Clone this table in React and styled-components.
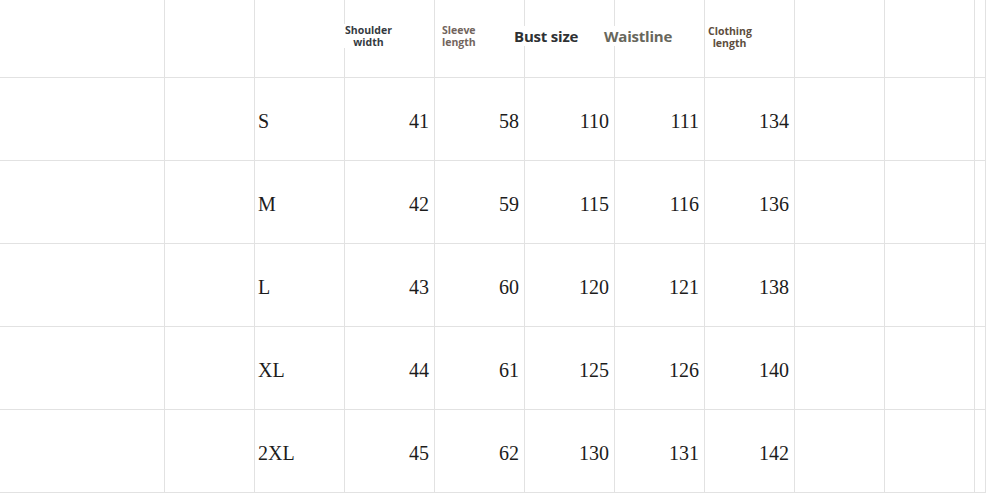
import styled, { createGlobalStyle } from "styled-components";

const sizes = [
  { name: "S", values: [41, 58, 110, 111, 134] },
  { name: "M", values: [42, 59, 115, 116, 136] },
  { name: "L", values: [43, 60, 120, 121, 138] },
  { name: "XL", values: [44, 61, 125, 126, 140] },
  { name: "2XL", values: [45, 62, 130, 131, 142] },
];

export default function App() {
  return (
    <>
      <Global />
      <Sheet>
        <HeadCell />
        <HeadCell />
        <HeadCell />
        <HeadCell>
          <SmallLabel $color="#343a3f" $shift="-3px" $width="49px">
            Shoulder
            <br />
            width
          </SmallLabel>
        </HeadCell>
        <HeadCell>
          <SmallLabel $color="#72645d" $shift="5px" $align="left">
            Sleeve
            <br />
            length
          </SmallLabel>
        </HeadCell>
        <HeadCell>
          <BigLabel $color="#2e3133" $shift="-12px">Bust size</BigLabel>
        </HeadCell>
        <HeadCell>
          <BigLabel $color="#67675c" $shift="-12px">Waistline</BigLabel>
        </HeadCell>
        <HeadCell>
          <SmallLabel $color="#5d4d3d" $shift="1px" $width="43px" $top="25px">
            Clothing
            <br />
            length
          </SmallLabel>
        </HeadCell>
        <HeadCell />
        <HeadCell />
        <HeadCell />

        {sizes.map((row) => (
          <Row key={row.name}>
            <Cell />
            <Cell />
            <Cell $align="left">{row.name}</Cell>
            {row.values.map((v, i) => (
              <Cell key={i}>{v}</Cell>
            ))}
            <Cell />
            <Cell />
            <Cell />
          </Row>
        ))}
      </Sheet>
    </>
  );
}

const Global = createGlobalStyle`
  html, body {
    margin: 0;
    padding: 0;
    background: #ffffff;
    overflow: hidden;
  }
`;

const Sheet = styled.div`
  display: grid;
  grid-template-columns: 165px repeat(9, 90px) 1fr;
  grid-template-rows: 78px;
  grid-auto-rows: 83px;
  width: 986px;
  height: 499px;
  overflow: hidden;
  background: #ffffff;
`;

const Row = styled.div`
  display: contents;
`;

const HeadCell = styled.div`
  display: flex;
  align-items: flex-start;
  border-right: 1px solid #e2e2e2;
  border-bottom: 1px solid #e2e2e2;
  min-width: 0;
`;

const SmallLabel = styled.div`
  margin-left: ${(p) => p.$shift};
  margin-top: ${(p) => p.$top || "24px"};
  width: ${(p) => p.$width || "auto"};
  padding: 0 2px;
  background: #ffffff;
  text-align: ${(p) => p.$align || "center"};
  font-family: "Open Sans", "Noto Sans", sans-serif;
  font-size: 10.5px;
  line-height: 12px;
  font-weight: 700;
  color: ${(p) => p.$color};
  white-space: nowrap;
`;

const BigLabel = styled.div`
  margin-left: ${(p) => p.$shift};
  margin-top: 26px;
  padding: 0 1px;
  background: #ffffff;
  font-family: "Open Sans", "Noto Sans", sans-serif;
  font-size: 15px;
  line-height: 20px;
  font-weight: 700;
  letter-spacing: -0.2px;
  color: ${(p) => p.$color};
  white-space: nowrap;
`;

const Cell = styled.div`
  display: flex;
  align-items: center;
  justify-content: ${(p) => (p.$align === "left" ? "flex-start" : "flex-end")};
  padding: 5px ${(p) => (p.$align === "left" ? "0" : "5px")} 0 ${(p) => (p.$align === "left" ? "3px" : "0")};
  border-right: 1px solid #e2e2e2;
  border-bottom: 1px solid #e2e2e2;
  font-family: "Liberation Serif", "DejaVu Serif", serif;
  font-size: 20px;
  color: #1c1c1c;
  min-width: 0;
`;
